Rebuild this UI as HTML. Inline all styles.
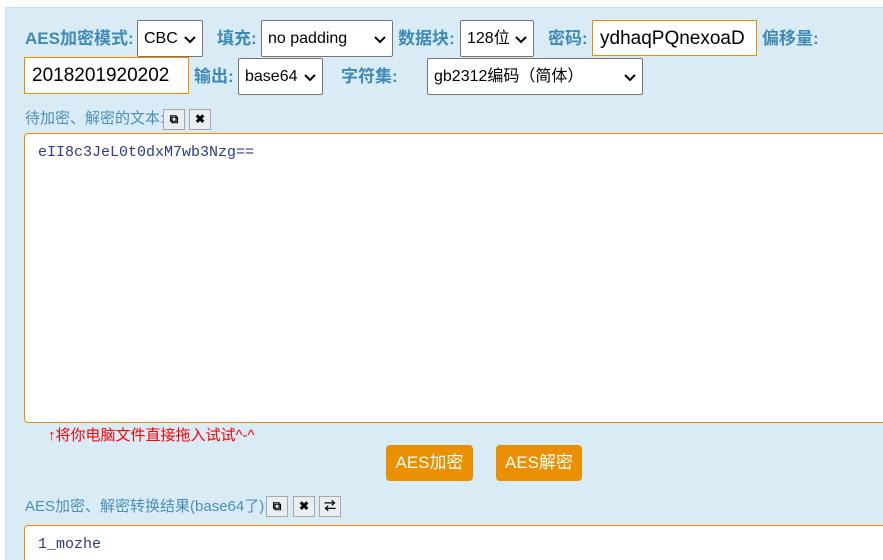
<!DOCTYPE html>
<html style="overflow:hidden;height:560px"><head><meta charset="utf-8"><style>
body{margin:0;width:883px;height:560px;overflow:hidden;background:#fff;font-family:"Liberation Sans","Noto Sans CJK SC",sans-serif;position:relative}
.panel{position:absolute;left:5px;top:7px;width:878px;height:553px;background:#d9ecf6;border:1px solid #c5e1ef;border-right:0;border-bottom:0;box-sizing:border-box}
.a{position:absolute}
.lb{position:absolute;font-weight:bold;font-size:17px;color:#3f8ab4;line-height:20px}
.sel{position:absolute;background:#fff;border:1px solid #767676;border-radius:2px;box-sizing:border-box;font-size:16px;color:#000;line-height:36px;padding-left:6px}
.sel svg{position:absolute;right:6px;top:15px}
.inp{position:absolute;background:#fff;border:1px solid #e98f00;box-sizing:border-box;font-size:19px;line-height:36px;padding-left:7px;overflow:hidden;white-space:nowrap;color:#000}
.ib{position:absolute;width:22px;height:21px;border:1px solid #a8a8a8;box-sizing:border-box;background:#e8eef2;font-size:12px;text-align:center;line-height:19px;font-weight:bold}
.ta{position:absolute;background:#fff;border:1px solid #e98f00;border-radius:4px;box-sizing:border-box;font-family:"Liberation Mono","Noto Sans CJK SC",monospace;font-size:15px;color:#2d3a8c;padding:10px 13px}
.btn{position:absolute;background:#e98f00;color:#fff;border-radius:4px;font-size:17px;text-align:center;line-height:36px}
.sm{position:absolute;font-size:15px;color:#4a8fb8;line-height:18px}
</style></head><body>
<div class="panel"></div>
<div class="lb" style="left:25px;top:29px">AES加密模式:</div>
<div class="sel" style="left:137px;top:20px;width:66px;height:37px">CBC<svg width="12" height="8"><path d="M1 1l5 5 5-5" stroke="#000" stroke-width="2" fill="none"/></svg></div>
<div class="lb" style="left:217px;top:29px">填充:</div>
<div class="sel" style="left:261px;top:20px;width:132px;height:37px">no padding<svg width="12" height="8"><path d="M1 1l5 5 5-5" stroke="#000" stroke-width="2" fill="none"/></svg></div>
<div class="lb" style="left:398px;top:29px">数据块:</div>
<div class="sel" style="left:460px;top:20px;width:74px;height:37px">128位<svg width="12" height="8"><path d="M1 1l5 5 5-5" stroke="#000" stroke-width="2" fill="none"/></svg></div>
<div class="lb" style="left:548px;top:29px">密码:</div>
<div class="inp" style="left:592px;top:20px;width:165px;height:36px">ydhaqPQnexoaD</div>
<div class="lb" style="left:762px;top:29px">偏移量:</div>
<div class="inp" style="left:24px;top:57px;width:165px;height:37px">2018201920202</div>
<div class="lb" style="left:194px;top:67px">输出:</div>
<div class="sel" style="left:238px;top:58px;width:85px;height:37px">base64<svg width="12" height="8"><path d="M1 1l5 5 5-5" stroke="#000" stroke-width="2" fill="none"/></svg></div>
<div class="lb" style="left:341px;top:67px">字符集:</div>
<div class="sel" style="left:427px;top:58px;width:216px;height:37px">gb2312编码（简体）<svg width="12" height="8"><path d="M1 1l5 5 5-5" stroke="#000" stroke-width="2" fill="none"/></svg></div>
<div class="sm" style="left:25px;top:110px">待加密、解密的文本:</div>
<div class="ib" style="left:163px;top:109px">⧉</div>
<div class="ib" style="left:189px;top:109px">✖</div>
<div class="ta" style="left:24px;top:133px;width:870px;height:290px">eII8c3JeL0t0dxM7wb3Nzg==</div>
<div class="a" style="left:48px;top:424px;font-size:15px;color:#f00">↑将你电脑文件直接拖入试试^-^</div>
<div class="btn" style="left:386px;top:445px;width:87px;height:36px">AES加密</div>
<div class="btn" style="left:496px;top:445px;width:86px;height:36px">AES解密</div>
<div class="sm" style="left:25px;top:498px">AES加密、解密转换结果(base64了):</div>
<div class="ib" style="left:266px;top:496px">⧉</div>
<div class="ib" style="left:293px;top:496px">✖</div>
<div class="ib" style="left:319px;top:496px">⇄</div>
<div class="ta" style="left:24px;top:525px;width:870px;height:60px">1_mozhe</div>
</body></html>
